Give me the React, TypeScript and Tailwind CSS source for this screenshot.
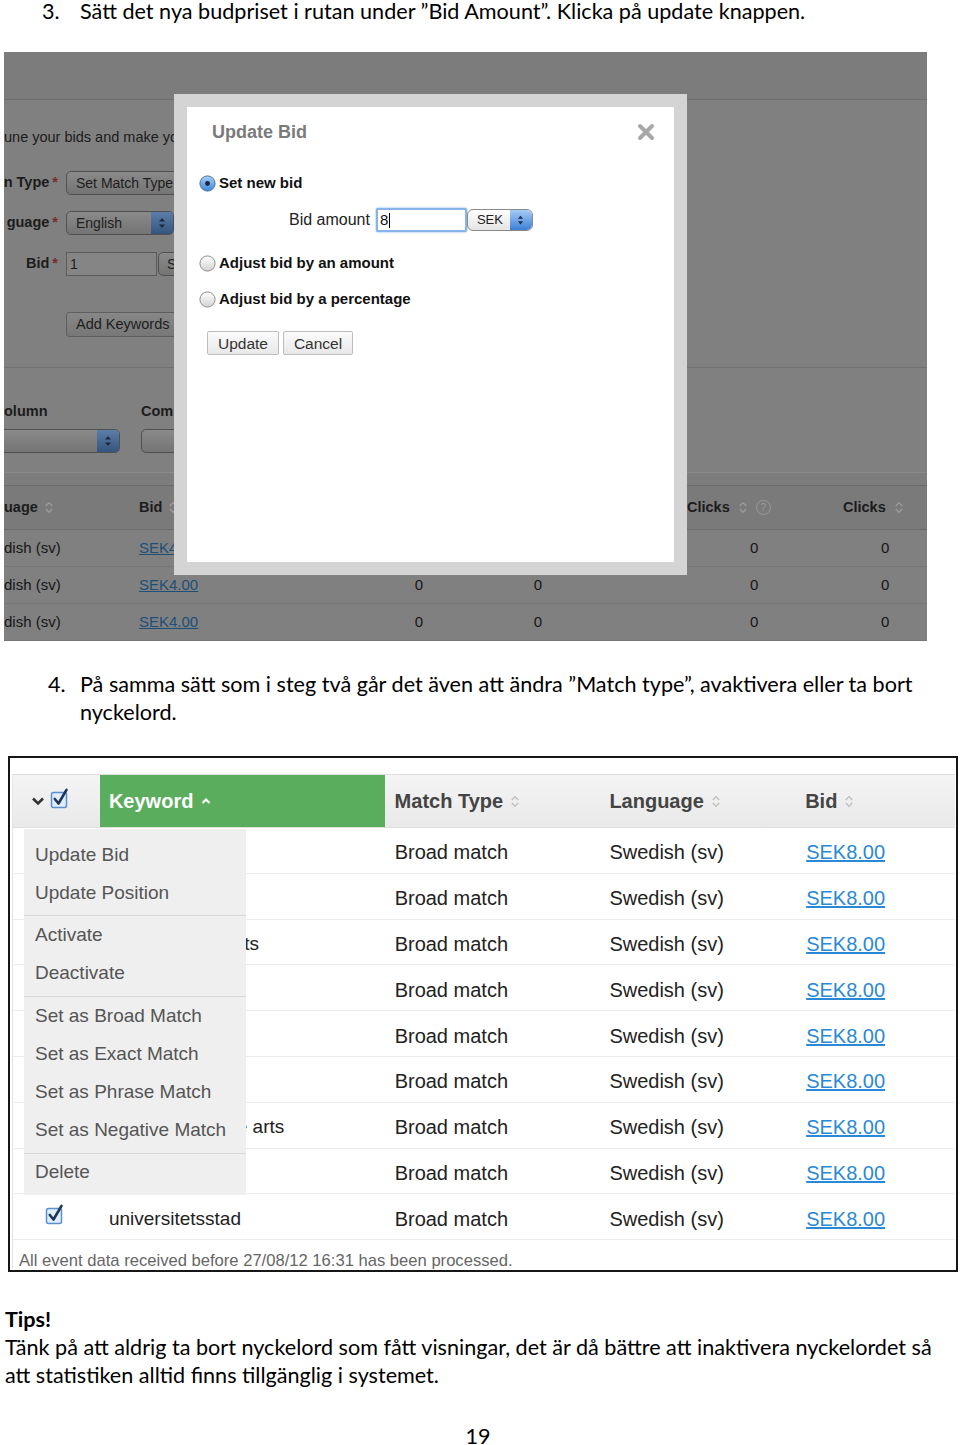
import React from 'react'

const SortIcon = ({ c = '#bdbdbd' }: { c?: string }) => (
  <svg width="10" height="15" viewBox="0 0 10 15" className="shrink-0">
    <path d="M1.8 6 L5 2.6 L8.2 6 M1.8 9 L5 12.4 L8.2 9" fill="none" stroke={c} strokeWidth="1.3" />
  </svg>
)

const CheckIcon = () => (
  <svg width="21" height="21" viewBox="0 0 21 21" className="shrink-0">
    <rect x="1.5" y="4.5" width="15" height="15" rx="2" fill="#dfeefc" stroke="#5b8fcf" strokeWidth="1.5" />
    <path d="M4.8 11 L8.5 15.5 L16.5 1.8" fill="none" stroke="#1f3556" strokeWidth="2.6" strokeLinecap="round" strokeLinejoin="round" />
  </svg>
)

const Radio = ({ on = false }: { on?: boolean }) => (
  <svg width="17" height="17" viewBox="0 0 17 17" className="shrink-0">
    <defs>
      <linearGradient id="rOn" x1="0" y1="0" x2="0" y2="1">
        <stop offset="0" stopColor="#a9d0f5" />
        <stop offset="1" stopColor="#3f86d8" />
      </linearGradient>
      <linearGradient id="rOff" x1="0" y1="0" x2="0" y2="1">
        <stop offset="0" stopColor="#ffffff" />
        <stop offset="1" stopColor="#d3d3d3" />
      </linearGradient>
    </defs>
    <circle cx="8.5" cy="8.5" r="7.6" fill={on ? 'url(#rOn)' : 'url(#rOff)'} stroke={on ? '#4a72a8' : '#8c8c8c'} strokeWidth="1" />
    {on && <circle cx="8.5" cy="8.5" r="2.4" fill="#17263c" />}
  </svg>
)

const UpDown = ({ c = '#fff', w = 8 }: { c?: string; w?: number }) => (
  <svg width={w} height="14" viewBox="0 0 8 14">
    <path d="M1 5.5 L4 2 L7 5.5 Z M1 8.5 L4 12 L7 8.5 Z" fill={c} />
  </svg>
)

function DarkSelect({ text, w, arrows = false }: { text: string; w: number; arrows?: boolean }) {
  return (
    <div style={{ width: w }} className="flex h-[24px] shrink-0 items-center overflow-hidden rounded-[5px] border border-[#505050] bg-linear-to-b from-[#8a8a8a] to-[#747474] text-[14px] text-[#1d1d1d]">
      <span className="pl-[9px] whitespace-nowrap">{text}</span>
      {arrows && (
        <span className="ml-auto flex h-full w-[22px] items-center justify-center bg-linear-to-b from-[#5b7ea8] to-[#34557e]">
          <UpDown c="#202a36" />
        </span>
      )}
    </div>
  )
}

function BackTable() {
  const rows = ['dish (sv)', 'dish (sv)', 'dish (sv)']
  return (
    <div>
      <div className="h-[1px] bg-[#8a8a8a]" />
      <div className="h-[12px] bg-[#7d7d7d]" />
      <div className="flex h-[45px] items-center border-y border-[#6c6c6c] bg-[#7a7a7a] text-[14.5px] font-bold text-[#1c1c1c]">
        <div className="flex w-[135px] items-center gap-[6px]">uage <SortIcon c="#9c9c9c" /></div>
        <div className="flex w-[250px] items-center gap-[6px]">Bid <SortIcon c="#9c9c9c" /></div>
        <div className="w-[60px]" />
        <div className="w-[178px]" />
        <div className="flex w-[173px] items-center gap-[8px] pl-[60px]">
          Clicks <SortIcon c="#9c9c9c" />
          <span className="flex h-[15px] w-[15px] items-center justify-center rounded-full border border-[#999] text-[10px] font-normal text-[#999]">?</span>
        </div>
        <div className="flex w-[123px] items-center gap-[8px] pl-[43px]">Clicks <SortIcon c="#9c9c9c" /></div>
      </div>
      {rows.map((r, i) => (
        <div key={i} className="flex h-[37px] items-center border-b border-[#767676] text-[15px] text-[#161616]">
          <div className="w-[135px]">{r}</div>
          <div className="w-[250px] text-[#1d4f78] underline">SEK4.00</div>
          <div className="w-[60px] text-center">0</div>
          <div className="w-[178px] text-center">0</div>
          <div className="w-[173px] pl-[123px]">0</div>
          <div className="w-[123px] pl-[81px]">0</div>
        </div>
      ))}
    </div>
  )
}

function UpdateBidDialog() {
  return (
    <div className="absolute left-[170px] top-[42px] h-[481px] w-[513px] bg-[#d4d4d4] p-[13px]">
      <div className="h-full bg-white text-[#111]">
        <div className="flex items-center justify-between pl-[25px] pr-[19px] pt-[14px]">
          <span className="text-[18px] leading-[22px] font-bold text-[#7a7a7a]">Update Bid</span>
          <svg width="18" height="18" viewBox="0 0 18 18">
            <path d="M3 3 L15 15 M15 3 L3 15" stroke="#a8a8a8" strokeWidth="4" strokeLinecap="round" />
          </svg>
        </div>
        <div className="mt-[31px] flex h-[18px] items-center gap-[3px] pl-[12px] text-[15px] font-bold">
          <Radio on />
          <span>Set new bid</span>
        </div>
        <div className="mt-[16px] flex h-[24px] items-center pl-[102px]">
          <span className="text-[16px] text-[#222]">Bid amount</span>
          <div className="ml-[6px] flex h-[24px] w-[91px] items-center rounded-[2px] border-2 border-[#86b4e8] bg-white pl-[2px] text-[15px] shadow-[0_0_2px_#6aa0e0]">
            8<span className="ml-px h-[15px] w-px bg-black" />
          </div>
          <div className="flex h-[22px] w-[66px] items-center overflow-hidden rounded-[6px] border border-[#8a8a8a] bg-linear-to-b from-white to-[#e4e4e4] text-[13px] text-[#222]">
            <span className="pl-[9px]">SEK</span>
            <span className="ml-auto flex h-full w-[22px] items-center justify-center rounded-r-[5px] bg-linear-to-b from-[#a5cbf5] to-[#3b7fd6]">
              <UpDown c="#1c2d48" w={7} />
            </span>
          </div>
        </div>
        <div className="mt-[22px] flex h-[18px] items-center gap-[3px] pl-[12px] text-[15px] font-bold">
          <Radio />
          <span>Adjust bid by an amount</span>
        </div>
        <div className="mt-[18px] flex h-[18px] items-center gap-[3px] pl-[12px] text-[15px] font-bold">
          <Radio />
          <span>Adjust bid by a percentage</span>
        </div>
        <div className="mt-[23px] flex gap-[4px] pl-[20px]">
          <button className="h-[24px] w-[72px] rounded-[2px] border border-[#bdbdbd] bg-linear-to-b from-[#fbfbfb] to-[#e8e8e8] text-[15.5px] text-[#333]">Update</button>
          <button className="h-[24px] w-[70px] rounded-[2px] border border-[#bdbdbd] bg-linear-to-b from-[#fbfbfb] to-[#e8e8e8] text-[15.5px] text-[#333]">Cancel</button>
        </div>
      </div>
    </div>
  )
}

function ShotOne() {
  const label = 'flex w-[54px] shrink-0 justify-end gap-[3px] whitespace-nowrap text-[14.5px] font-bold text-[#1c1c1c]'
  return (
    <div className="relative ml-[4px] h-[589px] w-[923px] overflow-hidden bg-[#808080] font-['Liberation_Sans',Arial,sans-serif]">
      <div className="h-[48px] border-b border-[#6f6f6f] bg-[#7c7c7c]" />
      <p className="mt-[28px] text-[14.5px] leading-[18px] whitespace-nowrap text-[#1c1c1c]">une your bids and make your keywords work</p>
      <div className="mt-[25px] flex h-[24px] items-center gap-[8px]">
        <div className={label}>n Type <span className="text-[#7a2a2a]">*</span></div>
        <DarkSelect text="Set Match Type" w={130} />
      </div>
      <div className="mt-[16px] flex h-[24px] items-center gap-[8px]">
        <div className={label}>guage <span className="text-[#7a2a2a]">*</span></div>
        <DarkSelect text="English" w={108} arrows />
      </div>
      <div className="mt-[17px] flex h-[24px] items-center gap-[8px]">
        <div className={label}>Bid <span className="text-[#7a2a2a]">*</span></div>
        <div className="flex h-[24px] w-[91px] items-center border border-[#5c5c5c] bg-[#858585] pl-[3px] text-[14px] text-[#1d1d1d]">1</div>
        <div className="-ml-[7px] flex h-[24px] w-[40px] items-center rounded-[5px] border border-[#505050] bg-linear-to-b from-[#8a8a8a] to-[#747474] pl-[8px] text-[14px] text-[#1d1d1d]">SEK</div>
      </div>
      <div className="mt-[36px] flex pl-[62px]">
        <div className="flex h-[25px] w-[130px] items-center rounded-[3px] border border-[#5e5e5e] bg-linear-to-b from-[#878787] to-[#777] pl-[9px] text-[14.5px] whitespace-nowrap text-[#1d1d1d]">Add Keywords</div>
      </div>
      <div className="mt-[30px] h-px bg-[#727272]" />
      <div className="mt-[36px] flex h-[16px] items-center text-[14.5px] font-bold text-[#1c1c1c]">
        <span className="w-[137px]">olumn</span>
        <span>Compare</span>
      </div>
      <div className="mt-[9px] flex h-[24px] items-center gap-[21px]">
        <div className="-ml-[10px]"><DarkSelect text="" w={126} arrows /></div>
        <DarkSelect text="" w={80} />
      </div>
      <div className="mt-[19px]" />
      <BackTable />
      <UpdateBidDialog />
    </div>
  )
}

const keywords = ['uppsala', 'lund', 'studenters events', 'studentstad', 'universitet', 'studentliv', 'universitetet fine arts', 'studentbostads', 'universitetsstad']

function ActionMenu() {
  const groups = [
    ['Update Bid', 'Update Position'],
    ['Activate', 'Deactivate'],
    ['Set as Broad Match', 'Set as Exact Match', 'Set as Phrase Match', 'Set as Negative Match'],
    ['Delete'],
  ]
  return (
    <div className="absolute left-[14px] top-[71px] w-[222px] bg-[#efefef] pb-[3px] pt-[7px] text-[19px] text-[#555]">
      {groups.map((g, gi) => (
        <div key={gi}>
          {gi > 0 && <div className="mt-[3px] h-px bg-[#d8d8d8]" />}
          {g.map((it) => (
            <div key={it} className="flex h-[38.2px] items-center pl-[11px] whitespace-nowrap">{it}</div>
          ))}
        </div>
      ))}
    </div>
  )
}

function ShotTwo() {
  return (
    <div className="relative ml-[8px] mt-[30px] h-[516px] w-[950px] border-2 border-[#161616] bg-white font-['Liberation_Sans',Arial,sans-serif]">
      <div className="ml-[2px] mt-[16px] w-[943px] border-l border-[#e4e4e4]">
        <div className="flex h-[54px] border-y border-[#dedede] bg-linear-to-b from-[#f4f4f4] to-[#e9e9e9] text-[20px] font-bold text-[#444]">
          <div className="flex w-[87px] items-center gap-[5px] pl-[18px]">
            <svg width="14" height="10" viewBox="0 0 14 10"><path d="M2 2.5 L7 7.5 L12 2.5" fill="none" stroke="#333" strokeWidth="2.6" /></svg>
            <div className="-mt-[6px]"><CheckIcon /></div>
          </div>
          <div className="flex w-[285px] items-center gap-[8px] bg-[#5aad5c] pl-[9px] text-white">
            Keyword
            <svg width="10" height="8" viewBox="0 0 10 8"><path d="M1.5 6 L5 2.5 L8.5 6" fill="none" stroke="#fff" strokeWidth="2.2" /></svg>
          </div>
          <div className="flex w-[215px] items-center gap-[7px] pl-[10px]">Match Type <SortIcon /></div>
          <div className="flex w-[196px] items-center gap-[7px] pl-[10px]">Language <SortIcon /></div>
          <div className="flex w-[160px] items-center gap-[7px] pl-[10px]">Bid <SortIcon /></div>
        </div>
        {keywords.map((k, i) => (
          <div key={i} className="flex h-[45.8px] items-center border-b border-[#ececec] pt-[4px] text-[20px] text-[#222]">
            <div className="flex w-[87px] pl-[32px]"><div className="-mt-[8px]"><CheckIcon /></div></div>
            <div className="w-[285px] pl-[9px] text-[19px] whitespace-nowrap">{k}</div>
            <div className="w-[215px] pl-[10px]">Broad match</div>
            <div className="w-[196px] pl-[10px]">Swedish (sv)</div>
            <div className="w-[160px] pl-[11px] text-[#2a89d6] underline">SEK8.00</div>
          </div>
        ))}
        <div className="h-[29px] pl-[6px] pt-[12px] text-[16.6px] leading-[18px] text-[#666]">All event data received before 27/08/12 16:31 has been processed.</div>
      </div>
      <ActionMenu />
    </div>
  )
}

export default function App() {
  return (
    <div className="h-[1445px] w-[960px] overflow-hidden bg-white font-['Lato',sans-serif] text-black">
      <div className="flex h-[52px] flex-col">
        <p className="flex pl-[42px] text-[21.6px] leading-[22px]">
          <span className="w-[38px]">3.</span>
          <span>Sätt det nya budpriset i rutan under ”Bid Amount”. Klicka på update knappen.</span>
        </p>
      </div>
      <ShotOne />
      <div className="mt-[29px] flex pl-[48px] text-[21.6px] leading-[28px]">
        <span className="w-[32px] shrink-0">4.</span>
        <span className="whitespace-nowrap">
          På samma sätt som i steg två går det även att ändra ”Match type”, avaktivera eller ta bort
          <br />
          nyckelord.
        </span>
      </div>
      <ShotTwo />
      <div className="mt-[33px] pl-[5px] text-[21.6px] leading-[28px]">
        <p className="font-bold">Tips!</p>
        <p className="whitespace-nowrap">
          Tänk på att aldrig ta bort nyckelord som fått visningar, det är då bättre att inaktivera nyckelordet så
          <br />
          att statistiken alltid finns tillgänglig i systemet.
        </p>
      </div>
      <p className="mt-[36px] pr-[4px] text-center text-[21.6px] leading-[22px]">19</p>
    </div>
  )
}
